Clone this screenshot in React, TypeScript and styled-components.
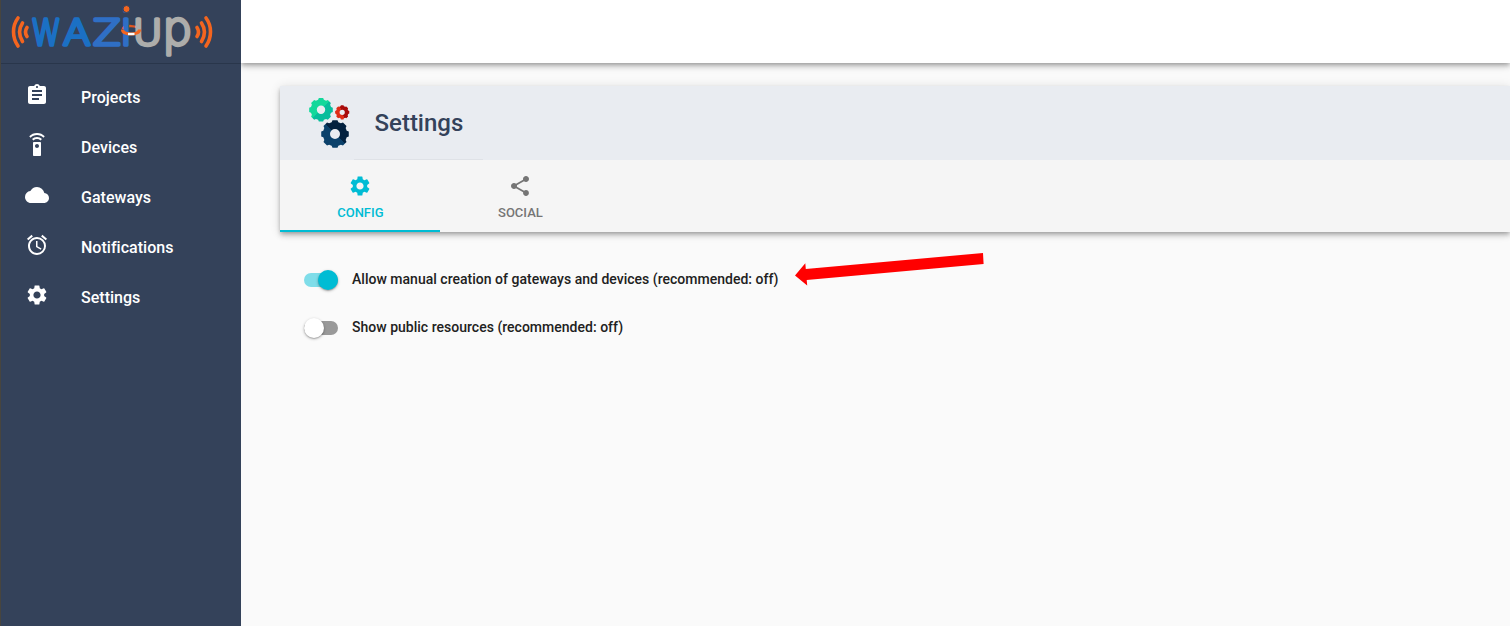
import React from "react";
import styled, { createGlobalStyle } from "styled-components";
import {
  MdAccessAlarm,
  MdAssignment,
  MdCloud,
  MdSettings,
  MdSettingsRemote,
  MdShare,
} from "react-icons/md";

const GlobalStyle = createGlobalStyle`
  *, *::before, *::after { box-sizing: border-box; }
  body {
    margin: 0;
    overflow: hidden;
    background: #fafafa;
    font-family: Roboto, "Liberation Sans", sans-serif;
  }
`;

const Page = styled.div`
  display: flex;
  height: 626px;
  overflow: hidden;
`;

const Sidebar = styled.aside`
  flex: 0 0 241px;
  z-index: 1;
  border-left: 1px solid #47453f;
  background: #34425a;
`;

const Brand = styled.div`
  height: 64px;
  border-bottom: 1px solid #29364b;
`;

const Menu = styled.nav`
  display: flex;
  flex-direction: column;
  padding-top: 8px;
`;

const MenuItem = styled.a`
  display: flex;
  align-items: center;
  height: 50px;
  padding-left: 24px;
  color: #fff;
  font-size: 16px;
  font-weight: 500;
  letter-spacing: 0.02px;

  svg {
    margin: -5px 32px 0 0;
  }
`;

const Content = styled.div`
  flex: 1;
  min-width: 0;
  display: flex;
  flex-direction: column;
`;

const TopBar = styled.header`
  flex: 0 0 63px;
  background: #fff;
  box-shadow: 0 2px 4px -1px rgba(0, 0, 0, 0.24), 0 4px 5px rgba(0, 0, 0, 0.14),
    0 1px 10px rgba(0, 0, 0, 0.12);
`;

const Card = styled.section`
  margin: 23px 0 0 39px;
  box-shadow: 0 2px 4px -1px rgba(0, 0, 0, 0.24), 0 4px 5px rgba(0, 0, 0, 0.14),
    0 1px 10px rgba(0, 0, 0, 0.12);
`;

const CardHeader = styled.div`
  display: flex;
  align-items: center;
  height: 74px;
  padding-left: 24px;
  background: #e9ecf1;
`;

const TitleBlock = styled.div`
  display: flex;
  align-items: center;
  width: 129px;
  height: 74px;
  padding-left: 20.5px;
  border-bottom: 1px solid #dfe2e7;
`;

const Title = styled.h1`
  margin: 0;
  color: #34425a;
  font-size: 24px;
  font-weight: 500;
`;

const Tabs = styled.div`
  display: flex;
  height: 72px;
  background: #f5f5f5;
`;

const Tab = styled.button<{ $active?: boolean }>`
  display: flex;
  flex-direction: column;
  align-items: center;
  gap: 7px;
  width: 160px;
  padding: 14px 0 0;
  border: 0;
  border-bottom: 2px solid ${(p) => (p.$active ? "#00bcd4" : "transparent")};
  background: none;
  color: ${(p) => (p.$active ? "#00bcd4" : "#757575")};
  font: 500 13px/15px Roboto, sans-serif;
  text-transform: uppercase;
`;

const TabLabel = styled.span`
  padding-left: 0.8px;
`;

const Options = styled.div`
  display: flex;
  flex-direction: column;
  padding: 24px 0 0 63px;
`;

const Option = styled.label`
  display: flex;
  align-items: center;
  gap: 14px;
  height: 48px;
  color: #212121;
  font-size: 14px;
  font-weight: 500;
`;

const OptionText = styled.span`
  margin-top: -2px;
  letter-spacing: 0.014px;
  white-space: nowrap;
`;

const Track = styled.span<{ $on?: boolean }>`
  display: flex;
  align-items: center;
  justify-content: ${(p) => (p.$on ? "flex-end" : "flex-start")};
  width: 34px;
  height: 14px;
  border-radius: 7px;
  background: ${(p) => (p.$on ? "#7fdde9" : "#999")};
`;

const Thumb = styled.span<{ $on?: boolean }>`
  width: 20px;
  height: 20px;
  border-radius: 50%;
  background: ${(p) => (p.$on ? "#00bcd4" : "#fff")};
  box-shadow: 0 1px 3px rgba(0, 0, 0, 0.3), 0 1px 1px rgba(0, 0, 0, 0.14);
`;

const Pointer = styled.svg`
  position: absolute;
  left: 790px;
  top: 248px;
`;

const LogoLetter = styled.text`
  font-family: "DejaVu Sans Light", "DejaVu Sans", sans-serif;
  font-weight: 200;
  stroke-linejoin: round;
  stroke-linecap: round;
`;

function Logo() {
  return (
    <svg width="239" height="63" viewBox="1 0 239 63" role="img">
      <g fill="none" stroke="#f4651f" strokeWidth="3.6" strokeLinecap="round">
        <path d="M18 18C12 26 12 37 18 46" />
        <path d="M22.5 23C18.5 29 18.5 35 22.5 41.5" />
        <path d="M27 27.5C25 30.5 25 33.5 27 36.5" />
        <path d="M206 18C212 26 212 37 206 46" />
        <path d="M201.5 23C205.5 29 205.5 35 201.5 41.5" />
        <path d="M197 27.5C199 30.5 199 33.5 197 36.5" />
      </g>
      <path d="M123 29C123 25 139 25 139 30" fill="none" stroke="#e2571f" strokeWidth="2.5" />
      <g fill="#1b70c4" stroke="#1b70c4" strokeWidth="3.4">
        <LogoLetter transform="translate(31.2 45) scale(.84 1)" fontSize="36">W</LogoLetter>
        <LogoLetter transform="translate(63 45) scale(1.12 1)" fontSize="36">A</LogoLetter>
      </g>
      <g fill="#2f6fc5" stroke="#2f6fc5" strokeWidth="3.4">
        <LogoLetter transform="translate(93 45) scale(1.12 1)" fontSize="36">Z</LogoLetter>
        <LogoLetter x="119.5" y="45" fontSize="48">i</LogoLetter>
      </g>
      <g fill="#adadab" stroke="#adadab" strokeWidth="3.4">
        <LogoLetter transform="translate(132.8 45) scale(1.13 1)" fontSize="36">U</LogoLetter>
        <LogoLetter x="162.2" y="44.6" fontSize="47.5">p</LogoLetter>
      </g>
      <circle cx="126.5" cy="9" r="3.5" fill="#f4651f" stroke="#34425a" strokeWidth="1" />
      <path d="M122.5 29.5C122 35.5 140 35.5 139.5 29.5" fill="none" stroke="#f4651f" strokeWidth="3" />
      <path d="M128 34H134.5" stroke="#fff" strokeWidth="2.4" />
    </svg>
  );
}

interface GearProps {
  cx: number;
  cy: number;
  r: number;
  hole: number;
  light: string;
  dark: string;
  angle: number;
}

function gearPath(cx: number, cy: number, r: number, hole: number) {
  const pts: string[] = [];
  for (let i = 0; i < 8; i++) {
    const a = (i * Math.PI) / 4;
    [[-0.28, 0.87], [-0.18, 1], [0.18, 1], [0.28, 0.87]].forEach(([d, k]) => {
      pts.push(`${(cx + r * k * Math.cos(a + d)).toFixed(2)} ${(cy + r * k * Math.sin(a + d)).toFixed(2)}`);
    });
  }
  return `M${pts.join("L")}ZM${cx - hole} ${cy}a${hole} ${hole} 0 1 0 ${hole * 2} 0a${hole} ${hole} 0 1 0 ${-hole * 2} 0Z`;
}

function Gear({ cx, cy, r, hole, light, dark, angle }: GearProps) {
  const id = `shade-${light.slice(1)}`;
  return (
    <>
      <linearGradient id={id} gradientTransform={`rotate(${angle} .5 .5)`}>
        <stop offset="0.5" stopColor={light} />
        <stop offset="0.5" stopColor={dark} />
      </linearGradient>
      <path d={gearPath(cx, cy, r, hole)} fill={`url(#${id})`} fillRule="evenodd" />
    </>
  );
}

function GearsIcon() {
  return (
    <svg width="50" height="60" viewBox="304 93 50 60">
      <Gear cx={321} cy={109.8} r={12} hole={4.2} light="#13d89b" dark="#08bd9c" angle={45} />
      <Gear cx={342.2} cy={112.3} r={7.2} hole={2.6} light="#df2c16" dark="#a80b0b" angle={-20} />
      <Gear cx={335} cy={134} r={14} hole={5} light="#0b416b" dark="#03213f" angle={-45} />
    </svg>
  );
}

const menu = [
  { label: "Projects", Icon: MdAssignment },
  { label: "Devices", Icon: MdSettingsRemote },
  { label: "Gateways", Icon: MdCloud },
  { label: "Notifications", Icon: MdAccessAlarm },
  { label: "Settings", Icon: MdSettings },
];

const options = [
  { label: "Allow manual creation of gateways and devices (recommended: off)", on: true },
  { label: "Show public resources (recommended: off)", on: false },
];

export default function App() {
  return (
    <Page>
      <GlobalStyle />
      <Sidebar>
        <Brand>
          <Logo />
        </Brand>
        <Menu>
          {menu.map(({ label, Icon }) => (
            <MenuItem key={label}>
              <Icon size={24} />
              {label}
            </MenuItem>
          ))}
        </Menu>
      </Sidebar>
      <Content>
        <TopBar />
        <Card>
          <CardHeader>
            <GearsIcon />
            <TitleBlock>
              <Title>Settings</Title>
            </TitleBlock>
          </CardHeader>
          <Tabs>
            <Tab $active>
              <MdSettings size={24} />
              <TabLabel>Config</TabLabel>
            </Tab>
            <Tab>
              <MdShare size={24} />
              <TabLabel>Social</TabLabel>
            </Tab>
          </Tabs>
        </Card>
        <Options>
          {options.map(({ label, on }) => (
            <Option key={label}>
              <Track $on={on}>
                <Thumb $on={on} />
              </Track>
              <OptionText>{label}</OptionText>
            </Option>
          ))}
        </Options>
      </Content>
      <Pointer width="200" height="44" viewBox="790 248 200 44">
        <path d="M795 275.5L805.3 263.3L805.8 268.9L983 253L983.6 264L806.7 280L807.2 285.5Z" fill="#f00" />
      </Pointer>
    </Page>
  );
}
